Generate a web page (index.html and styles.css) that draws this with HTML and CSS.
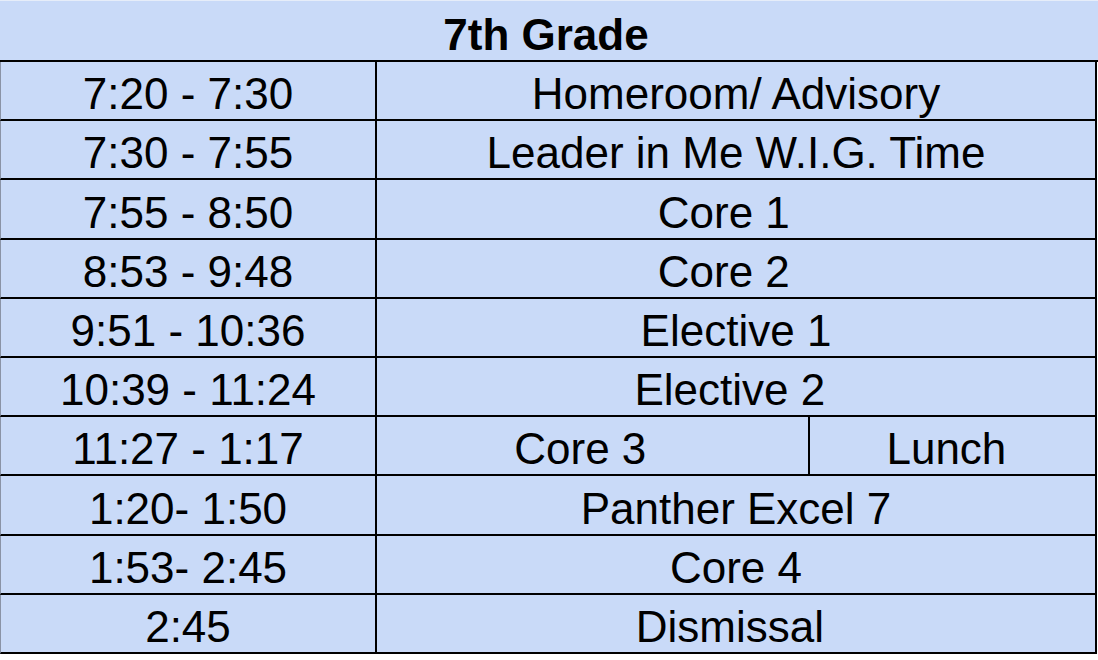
FILE: index.html
```html
<!DOCTYPE html>
<html lang="en">
<head>
<meta charset="utf-8">
<title>7th Grade Schedule</title>
<link rel="stylesheet" href="styles.css">
</head>
<body>
<div class="sheet">
  <div class="title">7th Grade</div>

  <div class="cell time">7:20 - 7:30</div>
  <div class="cell wide">Homeroom/ Advisory</div>

  <div class="cell time">7:30 - 7:55</div>
  <div class="cell wide">Leader in Me W.I.G. Time</div>

  <div class="cell time">7:55 - 8:50</div>
  <div class="cell wide">Core 1  </div>

  <div class="cell time">8:53 - 9:48</div>
  <div class="cell wide">Core 2  </div>

  <div class="cell time">9:51 - 10:36</div>
  <div class="cell wide">Elective 1</div>

  <div class="cell time">10:39 - 11:24</div>
  <div class="cell wide">Elective 2 </div>

  <div class="cell time">11:27 - 1:17</div>
  <div class="cell">Core 3  </div>
  <div class="cell">Lunch </div>

  <div class="cell time">1:20- 1:50</div>
  <div class="cell wide">Panther Excel 7</div>

  <div class="cell time">1:53- 2:45</div>
  <div class="cell wide">Core 4</div>

  <div class="cell time">2:45</div>
  <div class="cell wide">Dismissal </div>
</div>
</body>
</html>
```

FILE: styles.css
```css
html, body {
  margin: 0;
  padding: 0;
  background: #ffffff;
}

.sheet {
  display: grid;
  grid-template-columns: 377px 433px 287px;
  width: 1097px;
  font-family: "Liberation Sans", Arial, sans-serif;
  font-size: 44px;
  color: #000000;
}

.title {
  grid-column: 1 / -1;
  box-sizing: border-box;
  width: 1098px;
  height: 62px;
  padding-right: 6px;
  background: #c9daf8;
  border-top: 1px solid #e6edf9;
  border-bottom: 2px solid #000000;
  font-weight: bold;
  display: flex;
  align-items: flex-end;
  justify-content: center;
}

.cell {
  box-sizing: border-box;
  height: 59.2px;
  background: #c9daf8;
  border-right: 2px solid #000000;
  border-bottom: 2px solid #000000;
  display: flex;
  align-items: flex-end;
  justify-content: center;
  white-space: pre;
}

.time {
  border-left: 1px solid #8a93a6;
}

.wide {
  grid-column: span 2;
}
```
